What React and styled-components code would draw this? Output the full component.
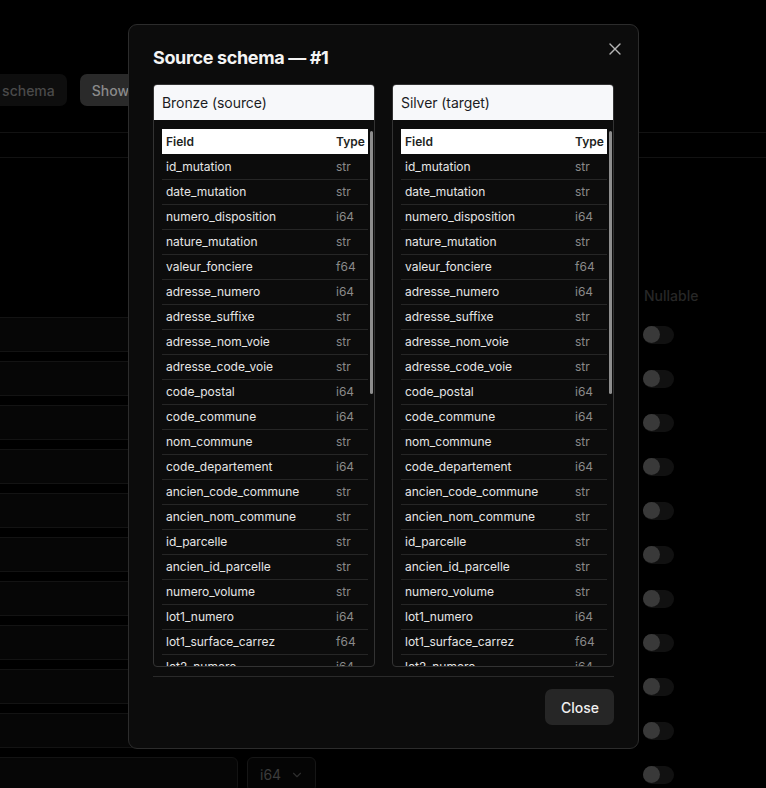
import React from "react";
import styled, { createGlobalStyle } from "styled-components";
import { X, ChevronDown } from "lucide-react";

const GlobalStyle = createGlobalStyle`
  html, body { margin: 0; padding: 0; background: #000; }
  body { font-family: Inter, "Noto Sans", "Liberation Sans", sans-serif; overflow: hidden; }
  * { box-sizing: border-box; }
`;

const FIELDS = [
  ["id_mutation", "str"], ["date_mutation", "str"], ["numero_disposition", "i64"],
  ["nature_mutation", "str"], ["valeur_fonciere", "f64"], ["adresse_numero", "i64"],
  ["adresse_suffixe", "str"], ["adresse_nom_voie", "str"], ["adresse_code_voie", "str"],
  ["code_postal", "i64"], ["code_commune", "i64"], ["nom_commune", "str"],
  ["code_departement", "i64"], ["ancien_code_commune", "str"], ["ancien_nom_commune", "str"],
  ["id_parcelle", "str"], ["ancien_id_parcelle", "str"], ["numero_volume", "str"],
  ["lot1_numero", "i64"], ["lot1_surface_carrez", "f64"], ["lot2_numero", "i64"],
  ["lot2_surface_carrez", "f64"], ["lot3_numero", "str"], ["lot3_surface_carrez", "f64"],
  ["lot4_numero", "i64"], ["lot4_surface_carrez", "f64"], ["lot5_numero", "i64"],
  ["lot5_surface_carrez", "f64"], ["nombre_lots", "i64"], ["code_type_local", "i64"],
  ["type_local", "str"], ["surface_reelle_bati", "i64"], ["nombre_pieces_principales", "i64"],
  ["code_nature_culture", "str"], ["nature_culture", "str"],
  ["code_nature_culture_speciale", "str"], ["nature_culture_speciale", "str"],
  ["surface_terrain", "i64"], ["longitude", "f64"], ["latitude", "f64"],
];

/* ---------- dimmed background page ---------- */
const Page = styled.div`
  position: relative;
  width: 766px;
  height: 788px;
  overflow: hidden;
  padding-top: 74px;
  background: #000;
`;

const Toolbar = styled.div`
  display: flex;
  gap: 13px;
  margin-left: -61px;
  height: 32px;
`;

const BgButton = styled.div`
  height: 32px;
  padding: 0 12px;
  border-radius: 7px;
  display: flex;
  align-items: center;
  font-size: 14px;
  font-weight: 500;
  white-space: nowrap;
  background: ${(p) => (p.$primary ? "#2a2a2a" : "#0e0e0e")};
  color: ${(p) => (p.$primary ? "#8a8a8a" : "#4a4a4a")};
`;

const TabBar = styled.div`
  margin-top: 26px;
  height: 26px;
  border-top: 1px solid #121212;
  border-bottom: 1px solid #121212;
`;

const FieldGrid = styled.div`
  margin-top: 127px;
  margin-left: -40px;
  display: flex;
  flex-direction: column;
  gap: 9px;
`;

const GridRow = styled.div`
  display: grid;
  grid-template-columns: 278px 69px 1fr 123px;
  column-gap: 9px;
  align-items: center;
  height: ${(p) => (p.$head ? "20px" : "35px")};
  margin-bottom: ${(p) => (p.$head ? "3px" : "0")};
`;

const HeadLabel = styled.div`
  font-size: 14px;
  font-weight: 500;
  color: #272727;
  padding-left: 1px;
`;

const BgInput = styled.div`
  height: 35px;
  border: 1px solid #131313;
  border-radius: 6px;
  background: #060606;
`;

const BgSelect = styled.div`
  height: 35px;
  border: 1px solid #161616;
  border-radius: 6px;
  background: #050505;
  display: flex;
  align-items: center;
  justify-content: space-between;
  padding: 0 11px 0 12px;
  font-size: 14px;
  color: #3c3c3c;
`;

const Toggle = styled.div`
  width: 31px;
  height: 18px;
  border-radius: 9px;
  background: #111;
  display: flex;
  align-items: center;
  &::before {
    content: "";
    width: 17px;
    height: 17px;
    border-radius: 50%;
    background: #393939;
  }
`;

/* ---------- modal ---------- */
const Overlay = styled.div`
  position: fixed;
  inset: 0;
  display: flex;
  justify-content: flex-start;
  align-items: flex-start;
  padding: 24px 0 0 128px;
`;

const Modal = styled.div`
  position: relative;
  width: 511px;
  height: 725px;
  background: #0c0c0c;
  border: 1px solid #2c2c2c;
  border-radius: 9px;
  padding: 22px 24px 23px 24px;
  display: flex;
  flex-direction: column;
`;

const Title = styled.h2`
  margin: 0;
  font-size: 18px;
  font-weight: 700;
  line-height: 22px;
  letter-spacing: -0.02em;
  color: #f4f4f4;
`;

const CloseIcon = styled.button`
  position: absolute;
  top: 14px;
  right: 13px;
  width: 20px;
  height: 20px;
  padding: 0;
  border: 0;
  background: transparent;
  color: #b5b5b5;
  display: flex;
  align-items: center;
  justify-content: center;
  cursor: pointer;
`;

const Panels = styled.div`
  margin-top: 15px;
  flex: 1;
  min-height: 0;
  display: grid;
  grid-template-columns: 222px 222px;
  column-gap: 17px;
`;

const Panel = styled.section`
  border: 1px solid #333;
  border-radius: 4px;
  overflow: hidden;
  display: flex;
  flex-direction: column;
  min-height: 0;
`;

const PanelHead = styled.div`
  height: 35px;
  flex: none;
  background: #f7f8fa;
  color: #1b1c1f;
  font-size: 14px;
  letter-spacing: -0.005em;
  display: flex;
  align-items: center;
  padding-left: 8px;
`;

const PanelBody = styled.div`
  position: relative;
  flex: 1;
  min-height: 0;
  padding: 9px 1px 0 8px;
  display: flex;
  flex-direction: column;
`;

const Scroll = styled.div`
  flex: 1;
  min-height: 0;
  overflow-y: auto;
  padding-right: 5px;
  scrollbar-width: none;
  &::-webkit-scrollbar { display: none; }
`;

/* drawn scroll indicator (headless browsers hide native scrollbars) */
const ScrollThumb = styled.div`
  position: absolute;
  top: 11px;
  right: 1px;
  width: 3px;
  border-radius: 2px;
  background: #8e8e8e;
`;

const Table = styled.table`
  width: 100%;
  border-collapse: collapse;
  table-layout: fixed;
  font-size: 12px;
`;

const Th = styled.th`
  position: sticky;
  top: 0;
  background: #fff;
  color: #1e1f22;
  font-weight: 600;
  font-size: 12px;
  height: 25px;
  padding: 0 4px;
  text-align: left;
  width: ${(p) => (p.$w ? p.$w : "auto")};
`;

const Td = styled.td`
  height: 25px;
  padding: 0 4px;
  border-bottom: 1px solid #262626;
  color: ${(p) => (p.$muted ? "#8a8a8a" : "#e6e6e6")};
  white-space: nowrap;
  overflow: hidden;
`;

const Footer = styled.div`
  margin-top: 9px;
  border-top: 1px solid #2a2a2a;
  padding-top: 12px;
  display: flex;
  justify-content: flex-end;
`;

const CloseButton = styled.button`
  height: 36px;
  padding: 0 15px 0 16px;
  border: 0;
  border-radius: 7px;
  background: #262626;
  color: #f0f0f0;
  font-family: inherit;
  font-size: 14px;
  font-weight: 500;
  cursor: pointer;
`;

function SchemaPanel({ title }) {
  return (
    <Panel>
      <PanelHead>{title}</PanelHead>
      <PanelBody>
        <Scroll>
          <Table>
            <thead>
              <tr>
                <Th>Field</Th>
                <Th $w="36px">Type</Th>
              </tr>
            </thead>
            <tbody>
              {FIELDS.map(([name, type]) => (
                <tr key={name}>
                  <Td>{name}</Td>
                  <Td $muted>{type}</Td>
                </tr>
              ))}
            </tbody>
          </Table>
        </Scroll>
        <ScrollThumb style={{ height: 263 }} />
      </PanelBody>
    </Panel>
  );
}

export default function App() {
  const bgRows = FIELDS.slice(0, 11);
  return (
    <>
      <GlobalStyle />
      <Page>
        <Toolbar>
          <BgButton>Source schema</BgButton>
          <BgButton $primary>Show target schema</BgButton>
        </Toolbar>
        <TabBar />
        <FieldGrid>
          <GridRow $head>
            <div />
            <div />
            <div />
            <HeadLabel>Nullable</HeadLabel>
          </GridRow>
          {bgRows.map(([name, type], i) => (
            <GridRow key={name}>
              <BgInput />
              <BgSelect>
                {i === 10 ? "i64" : type}
                <ChevronDown size={14} color="#2e2e2e" />
              </BgSelect>
              <div />
              <Toggle />
            </GridRow>
          ))}
        </FieldGrid>
        <Overlay>
          <Modal role="dialog">
            <Title>Source schema — #1</Title>
            <CloseIcon aria-label="Close">
              <X size={20} strokeWidth={1.6} />
            </CloseIcon>
            <Panels>
              <SchemaPanel title="Bronze (source)" />
              <SchemaPanel title="Silver (target)" />
            </Panels>
            <Footer>
              <CloseButton>Close</CloseButton>
            </Footer>
          </Modal>
        </Overlay>
      </Page>
    </>
  );
}
